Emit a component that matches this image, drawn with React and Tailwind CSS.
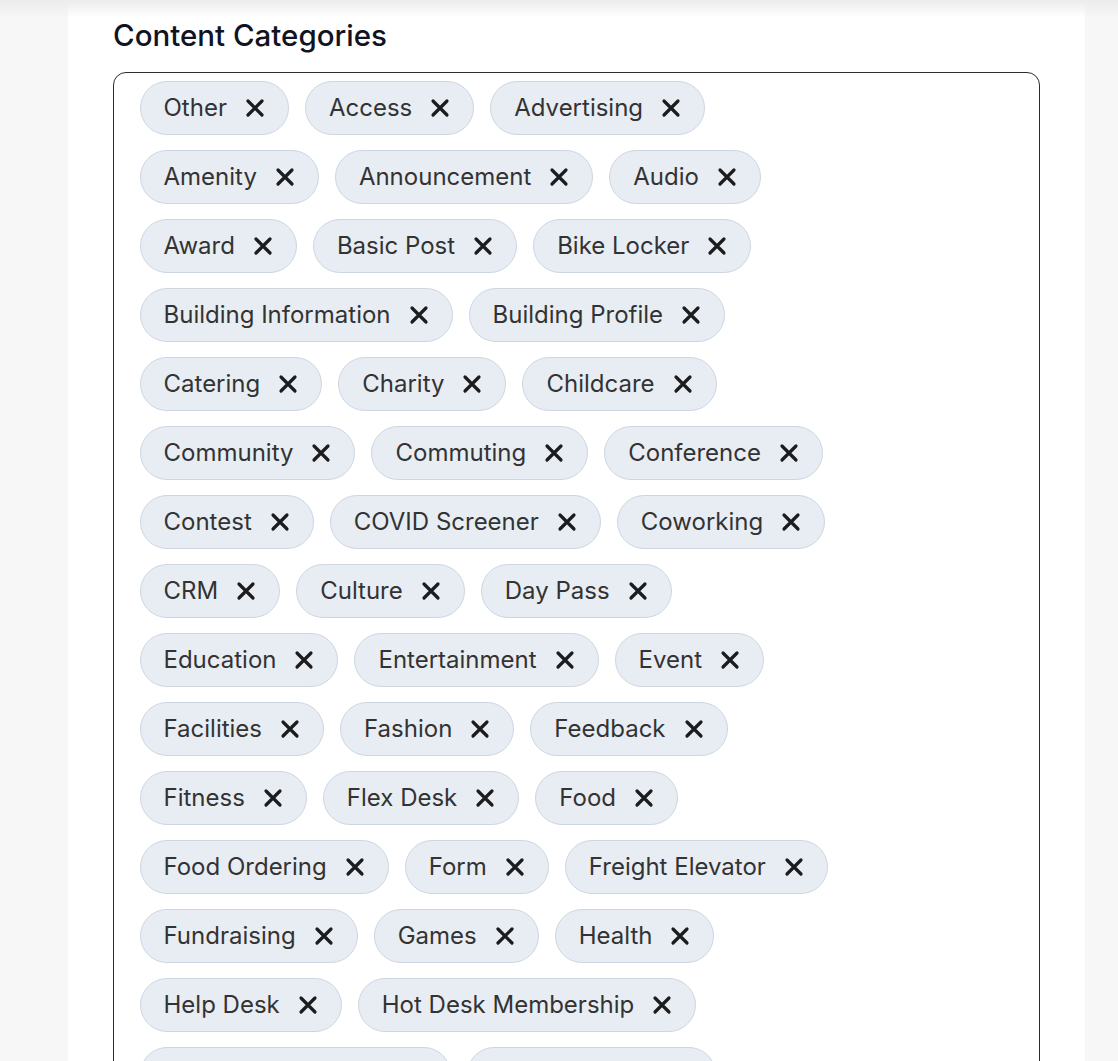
import React from "react";

const cats = [
  "Other","Access","Advertising","Amenity","Announcement","Audio","Award","Basic Post","Bike Locker",
  "Building Information","Building Profile","Catering","Charity","Childcare","Community","Commuting",
  "Conference","Contest","COVID Screener","Coworking","CRM","Culture","Day Pass","Education",
  "Entertainment","Event","Facilities","Fashion","Feedback","Fitness","Flex Desk","Food","Food Ordering",
  "Form","Freight Elevator","Fundraising","Games","Health","Help Desk","Hot Desk Membership",
  "Hospitality Services","Housekeeping","Information Technology","Insurance","IT Support","Kitchen",
  "Legal","Lost and Found","Maintenance","Marketing"
];

function X() {
  return (
    <svg width="20" height="20" viewBox="0 0 20 20" className="shrink-0">
      <path d="M3 3 L17 17 M17 3 L3 17" stroke="#1c1c1e" strokeWidth="3.2" strokeLinecap="round" />
    </svg>
  );
}

function Chip({ label }) {
  return (
    <div className="flex items-center h-[54px] pl-[23px] pr-[23px] gap-[18px] rounded-full bg-[#e8edf4] border border-[#cdd6e1] text-[24px] text-[#333333]">
      <span className="leading-none">{label}</span>
      <X />
    </div>
  );
}

export default function App() {
  return (
    <div className="relative h-[1061px] overflow-hidden bg-[#f7f7f8]" style={{ fontFamily: "Inter, 'Noto Sans', sans-serif" }}>
      <div className="absolute inset-x-0 top-0 h-[18px] bg-gradient-to-b from-[#ececec] to-transparent z-10" />
      <div className="ml-[68px] mr-[33px] min-h-[1400px] bg-white px-[45px] pt-[17px]">
        <h2 className="text-[29.5px] font-medium text-[#111322] leading-[36px]">Content Categories</h2>
        <div className="mt-[19px] border-[1.5px] border-[#2b2c31] rounded-[13px] pl-[25.5px] pr-[20px] pt-[8px] pb-[20px]">
          <div className="w-[745px] flex flex-wrap gap-x-[16px] gap-y-[15px]">
            {cats.map((c) => (
              <Chip key={c} label={c} />
            ))}
          </div>
        </div>
      </div>
    </div>
  );
}
